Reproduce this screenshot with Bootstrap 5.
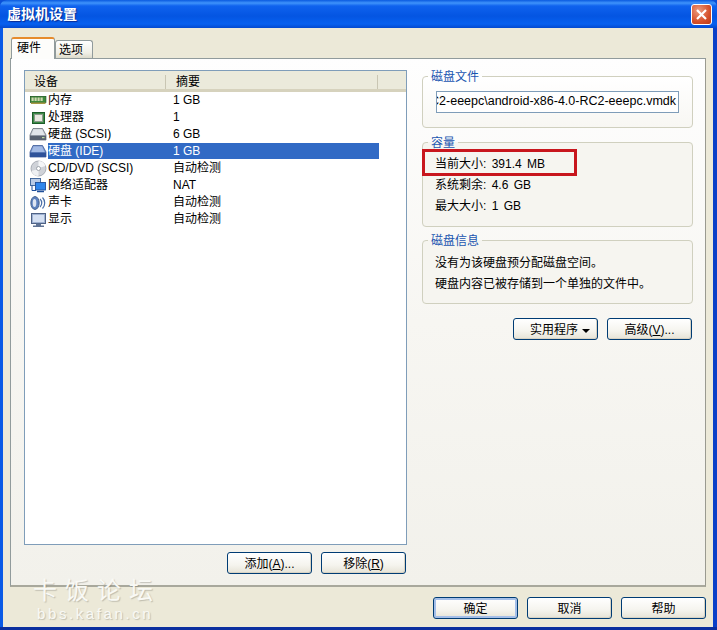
<!DOCTYPE html>
<html lang="zh-CN">
<head>
    <meta charset="UTF-8">
    <meta name="viewport" content="width=device-width, initial-scale=1.0">
    <title>虚拟机设置</title>
    <link href="https://cdn.jsdelivr.net/npm/bootstrap@5.3.2/dist/css/bootstrap.min.css" rel="stylesheet">
    <style>
        html, body { margin: 0; width: 717px; height: 630px; overflow: hidden; }
        body {
            font-family: "Liberation Sans", "Noto Sans CJK SC", sans-serif;
            font-size: 12px;
            line-height: 14px;
            color: #000;
            background: #0a4fd8;
        }
        /* window frame */
        .xp-window {
            width: 717px;
            height: 630px;
            position: relative;
            border-radius: 7px 7px 0 0;
            background: linear-gradient(90deg, #0a5ae6 0, #0a5ae6 3px, #0a3fc8 3px, #0a3fc8 100%);
            border-bottom: 3px solid #0b2f9f;
        }
        .xp-title {
            height: 28px;
            padding: 0 5px 0 7px;
            border-radius: 7px 7px 0 0;
            background: linear-gradient(180deg, #0a5ae0 0, #3f93fb 3px, #0f62ee 6px, #0455e2 16px, #0760ef 24px, #0349cf 28px);
            color: #fff;
            font-size: 14px;
            font-weight: 700;
            text-shadow: 1px 1px 1px #0a2a90;
        }
        .xp-close {
            width: 21px;
            height: 21px;
            border: 1px solid #fff;
            border-radius: 3px;
            background: radial-gradient(circle at 35% 30%, #ec9c80, #d6512b 60%, #b93a18);
        }
        .xp-client {
            margin: 0 4px 0 3px;
            height: 599px;
            padding: 8px 7px 0 7px;
            background: #ece9d8;
        }
        /* tabs */
        .xp-tabs { height: 22px; padding-left: 1px; border: 0; flex-wrap: nowrap; align-items: flex-end; }
        .xp-tab {
            height: 18px;
            width: 38px;
            padding: 2px 0 0 3px;
            border: 1px solid #919b9c;
            border-bottom: 0;
            border-radius: 3px 3px 0 0;
            background: linear-gradient(180deg, #fff, #f0efe6 70%, #dcdacb);
        }
        .xp-tab-on {
            height: 22px;
            width: 44px;
            padding: 2px 0 0 5px;
            position: relative;
            z-index: 1;
            margin-bottom: -1px;
            background: #fdfdfb;
            border-top: 2px solid #e68b2c;
        }
        .xp-panel {
            height: 529px;
            padding: 11px 0 0 13px;
            border: 1px solid #919b9c;
            border-right: 1px solid #9a9a90;
            border-bottom: 2px solid #a8a89c;
            background: linear-gradient(180deg, #fefefe 0, #f7f6f2 50%, #f2f1eb 100%);
        }
        .xp-left { width: 383px; margin-right: 15px; }
        .xp-right { width: 271px; margin-top: -1px; }
        /* device list */
        .xp-listbox { height: 475px; background: #fff; border: 1px solid #7f9db9; }
        .xp-head {
            height: 21px;
            padding-top: 4px;
            background: #ebeadb;
            border-bottom: 3px solid #d6d2bd;
        }
        .xp-head-a { width: 141px; padding-left: 9px; border-right: 1px solid #c9c6b3; height: 14px; }
        .xp-head-b { width: 212px; padding-left: 10px; border-right: 1px solid #c9c6b3; height: 14px; }
        .xp-row { height: 17px; padding-left: 2px; white-space: nowrap; }
        .xp-ico { width: 21px; height: 17px; flex: none; }
        .xp-name { width: 125px; height: 16px; padding-top: 1px; }
        .xp-val { width: 206px; height: 16px; padding-top: 1px; }
        .xp-row-sel .xp-name, .xp-row-sel .xp-val { background: #316ac5; color: #fff; }
        .xp-left-btns { margin: 7px 1px 0 0; gap: 9px; }
        /* group boxes */
        .xp-group {
            border: 1px solid #d0d0bf;
            border-radius: 4px;
            padding: 0 12px;
            margin: 0 0 7px 0;
            background: #f6f5f0;
        }
        .xp-group legend {
            float: none;
            width: auto;
            margin: 0 0 0 -7px;
            padding: 0 3px;
            font-size: 12px;
            line-height: 14px;
            color: #1a55b0;
            position: relative;
            top: 1px;
        }
        .xp-g1 { height: 59px; padding-left: 13px; background: linear-gradient(180deg, #fff, #f8f7f3); }
        .xp-g1 legend { margin-left: -8px; }
        .xp-g2 { height: 92px; margin-bottom: 6px; padding-top: 4px; }
        .xp-g3 { height: 71px; padding-top: 5px; }
        .xp-path {
            height: 22px;
            margin-top: 8px;
            width: 243px;
            padding: 2px 2px 0 1px;
            background: #fff;
            border: 1px solid #7f9db9;
            font-size: 12.5px;
            white-space: nowrap;
            overflow: hidden;
        }
        .xp-line { height: 21px; padding-top: 4px; white-space: nowrap; word-spacing: 2px; }
        .xp-hi {
            position: absolute;
            left: 422px;
            top: 149px;
            width: 155px;
            height: 27px;
            border: 3px solid #c8161d;
        }
        /* buttons */
        .xp-btn {
            width: 85px;
            height: 22px;
            padding: 2px 0 0 0;
            font-size: 12px;
            line-height: 14px;
            color: #000;
            text-align: center;
            border: 1px solid #003c74;
            border-radius: 3px;
            background: linear-gradient(180deg, #fff 0, #f5f4ee 60%, #e6e3d6 100%);
            box-shadow: inset -1px -1px 0 #d8d3c4;
        }
        .xp-btn-def { box-shadow: inset 0 0 0 2px #a5bfe8; }
        .xp-btn-menu { padding-left: 9px; }
        .xp-tri { display: inline-block; width: 0; height: 0; margin-left: 4px; vertical-align: 1px; border: 4px solid transparent; border-top-color: #000; border-bottom: 0; }
        .xp-right-btns { margin: 14px 1px 0 0; gap: 9px; }
        .xp-foot { height: 40px; padding: 10px 0 0 0; gap: 9px; }
        /* forum watermark */
        .xp-wm { position: absolute; left: 33px; top: 577px; color: #f9f9f5; text-shadow: 1px 1px 1px rgba(110,110,100,.35); pointer-events: none; }
        .xp-wm-a { font-size: 24px; line-height: 28px; letter-spacing: 8px; }
        .xp-wm-b { font-size: 15px; line-height: 17px; letter-spacing: 2.6px; padding-left: 4px; }
    </style>
</head>
<body>
    <svg width="0" height="0" class="position-absolute">
        <symbol id="i-disk" viewBox="0 0 21 17">
            <path d="M6 2.500h9.500l3.500 6.500v5H3V9z" fill="#c9cdd3" stroke="#59616e" stroke-width=".7"/>
            <path d="M3 9.500h16V14H3z" fill="#5a6270"/>
            <path d="M6.500 3.500h8.500l2.500 5.500h-13z" fill="#e3e6ea"/>
            <rect x="15" y="11" width="2.500" height="1.200" fill="#bcd9a2"/>
        </symbol>
        <symbol id="i-disk-sel" viewBox="0 0 21 17">
            <path d="M6 2.500h9.500l3.500 6.500v5H3V9z" fill="#7c99cf" stroke="#2b4a8c" stroke-width=".7"/>
            <path d="M3 9.500h16V14H3z" fill="#2f5299"/>
            <path d="M6.500 3.500h8.500l2.500 5.500h-13z" fill="#a3bae4"/>
        </symbol>
    </svg>

    <div class="xp-window">
        <div class="xp-title d-flex align-items-center justify-content-between">
            <span>虚拟机设置</span>
            <span class="xp-close d-flex align-items-center justify-content-center">
                <svg width="13" height="13" viewBox="0 0 13 13"><path d="M2 2l9 9M11 2l-9 9" stroke="#fff" stroke-width="2.2"/></svg>
            </span>
        </div>

        <div class="xp-client">
            <ul class="nav xp-tabs">
                <li class="xp-tab xp-tab-on">硬件</li>
                <li class="xp-tab">选项</li>
            </ul>
            <div class="xp-panel d-flex">
                <div class="xp-left">
                    <div class="xp-listbox">
                        <div class="xp-head d-flex">
                            <div class="xp-head-a">设备</div>
                            <div class="xp-head-b">摘要</div>
                        </div>
                        <div class="xp-row d-flex">
                            <svg class="xp-ico" viewBox="0 0 21 17"><rect x="3.400" y="4.400" width="15.500" height="6" fill="#3f8a3a" stroke="#1f5a20" stroke-width=".8"/><path d="M4.500 5.500h2.200v3.500H4.500zM7.500 5.500h2.200v3.500H7.500zM10.500 5.500h2.200v3.500h-2.200zM13.500 5.500h2.200v3.500h-2.200z" fill="#cfd6b0"/><path d="M4 10.500h14.500V12H4z" fill="#a89a44"/></svg>
                            <div class="xp-name">内存</div><div class="xp-val">1 GB</div>
                        </div>
                        <div class="xp-row d-flex">
                            <svg class="xp-ico" viewBox="0 0 21 17"><rect x="5.500" y="3.500" width="12" height="11" fill="#3c8a46" stroke="#1d5c2a"/><rect x="7.500" y="5.500" width="8" height="7" fill="#e8e8e0" stroke="#8a9a8a"/></svg>
                            <div class="xp-name">处理器</div><div class="xp-val">1</div>
                        </div>
                        <div class="xp-row d-flex">
                            <svg class="xp-ico"><use href="#i-disk"/></svg>
                            <div class="xp-name">硬盘 (SCSI)</div><div class="xp-val">6 GB</div>
                        </div>
                        <div class="xp-row xp-row-sel d-flex">
                            <svg class="xp-ico"><use href="#i-disk-sel"/></svg>
                            <div class="xp-name">硬盘 (IDE)</div><div class="xp-val">1 GB</div>
                        </div>
                        <div class="xp-row d-flex">
                            <svg class="xp-ico" viewBox="0 0 21 17"><circle cx="11.500" cy="8.500" r="7.500" fill="#cfd2d8" stroke="#9aa0a8" stroke-width=".8"/><path d="M11.500 1a7.500 7.500 0 0 1 7 5l-5 1.500a2 2 0 0 0-2-1z" fill="#f4f5f7"/><path d="M11.500 16a7.500 7.500 0 0 1-7-5l5-1.500a2 2 0 0 0 2 1z" fill="#eef0f3"/><circle cx="11.500" cy="8.500" r="2" fill="#fff" stroke="#8f959e" stroke-width=".8"/></svg>
                            <div class="xp-name">CD/DVD (SCSI)</div><div class="xp-val">自动检测</div>
                        </div>
                        <div class="xp-row d-flex">
                            <svg class="xp-ico" viewBox="0 0 21 17"><rect x="3.500" y="1.500" width="10" height="7" fill="#b9cbe6" stroke="#345d96" stroke-width=".9"/><path d="M5 8.500v5h4" fill="none" stroke="#1f4f9a"/><rect x="8.500" y="5.500" width="10" height="7.500" fill="#2f86ec" stroke="#1f4f9a" stroke-width=".9"/><path d="M10 14.500h7" stroke="#1f4f9a" stroke-width="1.500"/></svg>
                            <div class="xp-name">网络适配器</div><div class="xp-val">NAT</div>
                        </div>
                        <div class="xp-row d-flex">
                            <svg class="xp-ico" viewBox="0 0 21 17"><ellipse cx="8" cy="9" rx="4.200" ry="6.500" fill="#5e82be" stroke="#33527f" stroke-width=".8"/><ellipse cx="7.500" cy="9" rx="1.800" ry="4" fill="#dfe6f2"/><path d="M13 5a5.500 5.500 0 0 1 0 8M15.500 3.500a8 8 0 0 1 0 11" fill="none" stroke="#4a6ea8" stroke-width="1.200"/></svg>
                            <div class="xp-name">声卡</div><div class="xp-val">自动检测</div>
                        </div>
                        <div class="xp-row d-flex">
                            <svg class="xp-ico" viewBox="0 0 21 17"><rect x="4.500" y="2.500" width="14" height="10" fill="#9fb2d2" stroke="#4f6285"/><rect x="6" y="4" width="11" height="7" fill="#d5e0f2"/><path d="M9 12.500h5v2H9zM6 14.500h11V16H6z" fill="#5f7294"/></svg>
                            <div class="xp-name">显示</div><div class="xp-val">自动检测</div>
                        </div>
                    </div>
                    <div class="d-flex justify-content-end xp-left-btns">
                        <button class="btn xp-btn">添加(<u>A</u>)...</button>
                        <button class="btn xp-btn">移除(<u>R</u>)</button>
                    </div>
                </div>

                <div class="xp-right">
                    <fieldset class="xp-group xp-g1">
                        <legend>磁盘文件</legend>
                        <div class="xp-path d-flex justify-content-end">RC2-eeepc\android-x86-4.0-RC2-eeepc.vmdk</div>
                    </fieldset>
                    <fieldset class="xp-group xp-g2">
                        <legend>容量</legend>
                        <div class="xp-line">当前大小: 391.4 MB</div>
                        <div class="xp-line">系统剩余: 4.6 GB</div>
                        <div class="xp-line">最大大小: 1 GB</div>
                    </fieldset>
                    <fieldset class="xp-group xp-g3">
                        <legend>磁盘信息</legend>
                        <div class="xp-line">没有为该硬盘预分配磁盘空间。</div>
                        <div class="xp-line">硬盘内容已被存储到一个单独的文件中。</div>
                    </fieldset>
                    <div class="d-flex justify-content-end xp-right-btns">
                        <button class="btn xp-btn xp-btn-menu">实用程序<span class="xp-tri"></span></button>
                        <button class="btn xp-btn">高级(<u>V</u>)...</button>
                    </div>
                </div>
            </div>

            <div class="xp-foot d-flex justify-content-end">
                <button class="btn xp-btn xp-btn-def">确定</button>
                <button class="btn xp-btn">取消</button>
                <button class="btn xp-btn">帮助</button>
            </div>
        </div>

        <div class="xp-hi"></div>
        <div class="xp-wm">
            <div class="xp-wm-a">卡饭论坛</div>
            <div class="xp-wm-b">bbs.kafan.cn</div>
        </div>
    </div>

    <script src="https://cdn.jsdelivr.net/npm/bootstrap@5.3.2/dist/js/bootstrap.bundle.min.js"></script>
</body>
</html>
